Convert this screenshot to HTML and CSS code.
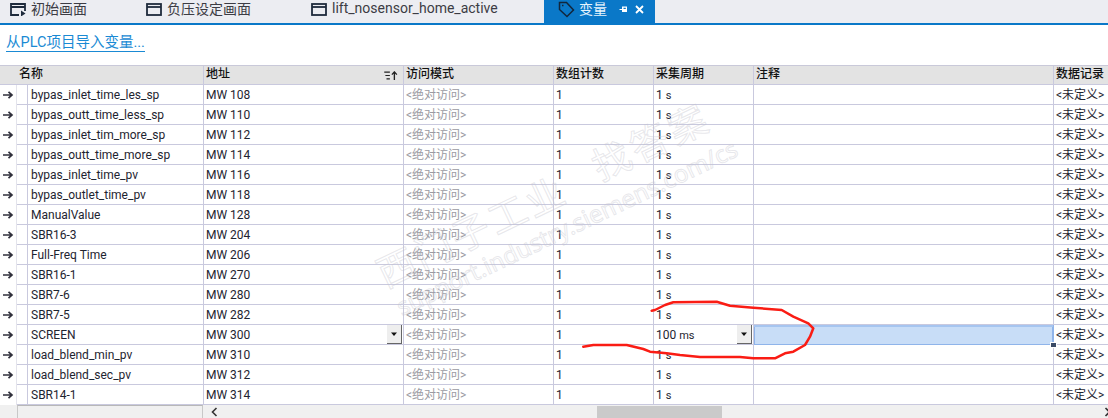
FILE: index.html
```html
<!DOCTYPE html>
<html lang="zh">
<head>
<meta charset="utf-8">
<title>变量</title>
<link rel="stylesheet" href="styles.css">
</head>
<body>
<svg width="0" height="0" class="defs"><defs>
<symbol id="arrow" viewBox="0 0 12 10"><path d="M1 5H9.5M6.5 1.8 10 5 6.500 8.200" fill="none" stroke="#30303c" stroke-width="1.700"/></symbol>
<symbol id="drop" viewBox="0 0 8 5"><path d="M1 .5H7L4 4Z" fill="#111"/></symbol>
<symbol id="screen" viewBox="0 0 16 13"><rect x="1" y="1" width="14" height="11" fill="none" stroke="#1e2a3c" stroke-width="1.800"/><path d="M1 4H15" stroke="#1e2a3c" stroke-width="1.800"/></symbol>
</defs></svg>
<nav class="tabs">
  <div class="tab tab-a"><svg class="ico" viewBox="0 0 16 13"><path d="M9 12H1V1H15V8M1 4H15" fill="none" stroke="#1e2a3c" stroke-width="1.800"/><path d="M11 7.500 15.500 10.500 11 13.500Z" fill="#1e2a3c"/></svg>初始画面</div>
  <div class="tab tab-b"><svg class="ico"><use href="#screen"/></svg>负压设定画面</div>
  <div class="tab tab-c"><svg class="ico"><use href="#screen"/></svg>lift_nosensor_home_active</div>
  <div class="tab tab-on">
    <svg class="tag" viewBox="0 0 17 17"><path d="M1.500 1.500H8.500L15.500 9 9 15.500 1.500 8.500ZM4 4.500H5.500" fill="none" stroke="#12263c" stroke-width="1.500"/></svg>
    <span class="tab-title">变量</span>
    <svg class="pin" viewBox="0 0 9 9"><path d="M.5 4H3V1.500H8V7H3V5H.5ZM4.500 2.800V4H6.800V2.800Z" fill="#fff" fill-rule="evenodd"/></svg>
    <svg class="close" viewBox="0 0 9 9"><path d="M1 1 8 8M8 1 1 8" stroke="#fff" stroke-width="1.800"/></svg>
  </div>
</nav>
<div class="link-bar"><a class="link">从PLC项目导入变量...</a></div>
<main class="sheet">
  <div class="row head">
    <div class="c c-arrow"></div><div class="c c-mark"></div>
    <div class="c c-name">名称</div>
    <div class="c c-addr">地址<span class="sort"><svg viewBox="0 0 12 8"><path d="M0 1H5M1 4H5M2 7H5" stroke="#222" stroke-width="1"/><path d="M9 8V1M6.800 3.200 9 .8 11.200 3.200" fill="none" stroke="#222" stroke-width="1.200"/></svg></span></div>
    <div class="c c-mode">访问模式</div><div class="c c-count">数组计数</div><div class="c c-cycle">采集周期</div><div class="c c-note">注释</div><div class="c c-log">数据记录</div>
  </div>
  <div class="row"><div class="c c-arrow"><svg class="arr"><use href="#arrow"/></svg></div><div class="c c-mark"></div><div class="c c-name">bypas_inlet_time_les_sp</div><div class="c c-addr">MW 108</div><div class="c c-mode">&lt;绝对访问&gt;</div><div class="c c-count">1</div><div class="c c-cycle">1 <small>s</small></div><div class="c c-note"></div><div class="c c-log">&lt;未定义&gt;</div></div>
  <div class="row"><div class="c c-arrow"><svg class="arr"><use href="#arrow"/></svg></div><div class="c c-mark"></div><div class="c c-name">bypas_outt_time_less_sp</div><div class="c c-addr">MW 110</div><div class="c c-mode">&lt;绝对访问&gt;</div><div class="c c-count">1</div><div class="c c-cycle">1 <small>s</small></div><div class="c c-note"></div><div class="c c-log">&lt;未定义&gt;</div></div>
  <div class="row"><div class="c c-arrow"><svg class="arr"><use href="#arrow"/></svg></div><div class="c c-mark"></div><div class="c c-name">bypas_inlet_tim_more_sp</div><div class="c c-addr">MW 112</div><div class="c c-mode">&lt;绝对访问&gt;</div><div class="c c-count">1</div><div class="c c-cycle">1 <small>s</small></div><div class="c c-note"></div><div class="c c-log">&lt;未定义&gt;</div></div>
  <div class="row"><div class="c c-arrow"><svg class="arr"><use href="#arrow"/></svg></div><div class="c c-mark"></div><div class="c c-name">bypas_outt_time_more_sp</div><div class="c c-addr">MW 114</div><div class="c c-mode">&lt;绝对访问&gt;</div><div class="c c-count">1</div><div class="c c-cycle">1 <small>s</small></div><div class="c c-note"></div><div class="c c-log">&lt;未定义&gt;</div></div>
  <div class="row"><div class="c c-arrow"><svg class="arr"><use href="#arrow"/></svg></div><div class="c c-mark"></div><div class="c c-name">bypas_inlet_time_pv</div><div class="c c-addr">MW 116</div><div class="c c-mode">&lt;绝对访问&gt;</div><div class="c c-count">1</div><div class="c c-cycle">1 <small>s</small></div><div class="c c-note"></div><div class="c c-log">&lt;未定义&gt;</div></div>
  <div class="row"><div class="c c-arrow"><svg class="arr"><use href="#arrow"/></svg></div><div class="c c-mark"></div><div class="c c-name">bypas_outlet_time_pv</div><div class="c c-addr">MW 118</div><div class="c c-mode">&lt;绝对访问&gt;</div><div class="c c-count">1</div><div class="c c-cycle">1 <small>s</small></div><div class="c c-note"></div><div class="c c-log">&lt;未定义&gt;</div></div>
  <div class="row"><div class="c c-arrow"><svg class="arr"><use href="#arrow"/></svg></div><div class="c c-mark"></div><div class="c c-name">ManualValue</div><div class="c c-addr">MW 128</div><div class="c c-mode">&lt;绝对访问&gt;</div><div class="c c-count">1</div><div class="c c-cycle">1 <small>s</small></div><div class="c c-note"></div><div class="c c-log">&lt;未定义&gt;</div></div>
  <div class="row"><div class="c c-arrow"><svg class="arr"><use href="#arrow"/></svg></div><div class="c c-mark"></div><div class="c c-name">SBR16-3</div><div class="c c-addr">MW 204</div><div class="c c-mode">&lt;绝对访问&gt;</div><div class="c c-count">1</div><div class="c c-cycle">1 <small>s</small></div><div class="c c-note"></div><div class="c c-log">&lt;未定义&gt;</div></div>
  <div class="row"><div class="c c-arrow"><svg class="arr"><use href="#arrow"/></svg></div><div class="c c-mark"></div><div class="c c-name">Full-Freq Time</div><div class="c c-addr">MW 206</div><div class="c c-mode">&lt;绝对访问&gt;</div><div class="c c-count">1</div><div class="c c-cycle">1 <small>s</small></div><div class="c c-note"></div><div class="c c-log">&lt;未定义&gt;</div></div>
  <div class="row"><div class="c c-arrow"><svg class="arr"><use href="#arrow"/></svg></div><div class="c c-mark"></div><div class="c c-name">SBR16-1</div><div class="c c-addr">MW 270</div><div class="c c-mode">&lt;绝对访问&gt;</div><div class="c c-count">1</div><div class="c c-cycle">1 <small>s</small></div><div class="c c-note"></div><div class="c c-log">&lt;未定义&gt;</div></div>
  <div class="row"><div class="c c-arrow"><svg class="arr"><use href="#arrow"/></svg></div><div class="c c-mark"></div><div class="c c-name">SBR7-6</div><div class="c c-addr">MW 280</div><div class="c c-mode">&lt;绝对访问&gt;</div><div class="c c-count">1</div><div class="c c-cycle">1 <small>s</small></div><div class="c c-note"></div><div class="c c-log">&lt;未定义&gt;</div></div>
  <div class="row"><div class="c c-arrow"><svg class="arr"><use href="#arrow"/></svg></div><div class="c c-mark"></div><div class="c c-name">SBR7-5</div><div class="c c-addr">MW 282</div><div class="c c-mode">&lt;绝对访问&gt;</div><div class="c c-count">1</div><div class="c c-cycle">1 <small>s</small></div><div class="c c-note"></div><div class="c c-log">&lt;未定义&gt;</div></div>
  <div class="row"><div class="c c-arrow"><svg class="arr"><use href="#arrow"/></svg></div><div class="c c-mark"></div><div class="c c-name">SCREEN</div><div class="c c-addr has-drop">MW 300<span class="drop"><svg><use href="#drop"/></svg></span></div><div class="c c-mode">&lt;绝对访问&gt;</div><div class="c c-count">1</div><div class="c c-cycle has-drop">100 <small>ms</small><span class="drop"><svg><use href="#drop"/></svg></span></div><div class="c c-note selected"><span class="handle"></span></div><div class="c c-log">&lt;未定义&gt;</div></div>
  <div class="row"><div class="c c-arrow"><svg class="arr"><use href="#arrow"/></svg></div><div class="c c-mark"></div><div class="c c-name">load_blend_min_pv</div><div class="c c-addr">MW 310</div><div class="c c-mode">&lt;绝对访问&gt;</div><div class="c c-count">1</div><div class="c c-cycle">1 <small>s</small></div><div class="c c-note"></div><div class="c c-log">&lt;未定义&gt;</div></div>
  <div class="row"><div class="c c-arrow"><svg class="arr"><use href="#arrow"/></svg></div><div class="c c-mark"></div><div class="c c-name">load_blend_sec_pv</div><div class="c c-addr">MW 312</div><div class="c c-mode">&lt;绝对访问&gt;</div><div class="c c-count">1</div><div class="c c-cycle">1 <small>s</small></div><div class="c c-note"></div><div class="c c-log">&lt;未定义&gt;</div></div>
  <div class="row"><div class="c c-arrow"><svg class="arr"><use href="#arrow"/></svg></div><div class="c c-mark"></div><div class="c c-name">SBR14-1</div><div class="c c-addr">MW 314</div><div class="c c-mode">&lt;绝对访问&gt;</div><div class="c c-count">1</div><div class="c c-cycle">1 <small>s</small></div><div class="c c-note"></div><div class="c c-log">&lt;未定义&gt;</div></div>
  <div class="scroll-row">
    <div class="sb-gap"></div>
    <div class="sb-frozen"></div>
    <div class="sb-track">
      <svg class="sb-left" viewBox="0 0 7 10"><path d="M5.500 1 1.500 5 5.500 9" fill="none" stroke="#333" stroke-width="1.600"/></svg>
      <div class="sb-thumb"></div>
      <svg class="sb-right" viewBox="0 0 7 10"><path d="M1.500 1 5.500 5 1.500 9" fill="none" stroke="#333" stroke-width="1.600"/></svg>
    </div>
  </div>
</main>
<div class="wm wm-cn">西门子工业</div>
<div class="wm wm-cn2">找答案</div>
<div class="wm wm-url">support.industry.siemens.com/cs</div>
<svg class="scribble" viewBox="0 0 1108 418"><path d="M651.700 310.700 655 310 665 305 673.300 302.300 716.700 301.700 730 305.700 753.300 307.700 781.700 310 793.300 316.700 808.300 323.300 813.300 328.300 810 336.700 805 345 793.300 351.700 785 353.300 775 358.300 753.300 358.300 740 357 700 357 680 355 666.700 353.300 650 351.700 643.300 349 626.700 345 593.300 345 583.300 346.700" fill="none" stroke="#fa1c14" stroke-width="2.500" stroke-linecap="round" stroke-linejoin="round"/></svg>
</body>
</html>
```
FILE: styles.css
```css
* { box-sizing: border-box; }
html, body { margin: 0; height: 418px; overflow: hidden; }
body {
  position: relative;
  width: 1108px;
  background: #fff;
  color: #1e2430;
  font: 12px Roboto, "Noto Sans CJK SC", sans-serif;
}
.defs { position: absolute; }
.tabs {
  display: flex;
  height: 25px;
  background: #ecedf2;
  border-bottom: 2px solid #0a78c8;
}
.tab {
  display: flex;
  align-items: center;
  padding: 0 0 8px 10px;
  height: 23px;
  font-size: 14px;
  color: #3c3c44;
  white-space: nowrap;
}
.ico { width: 16px; height: 13px; margin: 3px 5px 0 0; flex: none; }
.tab-a { width: 136px; }
.tab-b { width: 165px; }
.tab-c { width: 243px; }
.tab-on {
  width: 111px;
  padding-left: 14px;
  padding-bottom: 5px;
  background: #0a78c8;
  color: #e6f3fc;
}
.tag { width: 17px; height: 17px; margin-right: 4px; flex: none; }
.tab-title { width: 40px; margin-bottom: 2px; }
.pin { width: 9px; height: 9px; margin-right: 7px; flex: none; }
.close { width: 9px; height: 9px; flex: none; }
.link-bar { height: 40px; padding: 10px 0 0 6px; }
.link {
  display: inline-block;
  font-size: 14.500px;
  line-height: 16px;
  color: #1a8ad4;
  border-bottom: 1px solid #1a8ad4;
}
.sheet { border-top: 1px solid #c9c9d9; }
.row {
  display: grid;
  grid-template-columns: 17px 11px 176px 200px 150px 100px 100px 300px 54px;
  height: 20px;
  border-bottom: 1px solid #c9c9de;
}
.row.head {
  height: 19px;
  background: #e3e3e3;
  font-weight: 500;
  color: #111;
  border-bottom: 1px solid #c9c9de;
}
.row.head .c { border-right-color: #c9c9de; line-height: 16px; color: #111; }
.row.head .c-arrow, .row.head .c-mark { border-right: 0; }
.row.head .c-name { margin-left: -9px; padding-left: 0; }
.c {
  position: relative;
  min-width: 0;
  padding-left: 2px;
  border-right: 1px solid #c9c9de;
  line-height: 20px;
  white-space: nowrap;
  overflow: hidden;
}
.c-arrow { padding: 5px 0 0 2px; border-right: 1px solid #e4e4ec; background: #fff; }
.head .c-arrow { background: #e3e3e3; }
.arr { display: block; width: 12px; height: 10px; }
.c-name { padding-left: 3px; }
.c-mode { color: #9a9aa2; }
.c-log { border-right: 0; overflow: visible; padding-left: 2px; }
.c-cycle small { font-size: 11px; }
.sort { position: absolute; right: 5px; top: 5px; }
.sort svg { display: block; width: 14px; height: 9px; }
.has-drop .drop {
  position: absolute;
  right: 1px;
  top: 0;
  width: 15px;
  height: 19px;
  background: #eeeeee;
  border-right: 1px solid #666;
  border-bottom: 1px solid #666;
  display: flex;
  align-items: center;
  justify-content: center;
}
.drop svg { width: 8px; height: 5px; }
.selected {
  overflow: visible;
  background: #c8ddf7;
  box-shadow: inset 0 2px 0 #a6c5f0, inset 1px 0 0 #8fb4ea, inset 0 -1px 0 #8fb4ea, inset -1px 0 0 #8fb4ea;
  border-right-color: #8fb4ea;
}
.handle {
  position: absolute;
  right: -3px;
  bottom: -2px;
  width: 5px;
  height: 4px;
  background: #3a4a66;
  outline: 1px solid #fff;
  z-index: 1;
}
.scroll-row { display: flex; height: 13px; background: #f0f0f0; }
.sb-gap { width: 17px; }
.sb-frozen { width: 186px; background: #f0f0f0; border: 1px solid #c8c8c8; border-bottom: 0; border-top-color: #b8b8b8; }
.sb-track { position: relative; flex: 1; display: flex; align-items: center; padding-left: 5px; }
.sb-left { width: 7px; height: 10px; margin-left: 3px; }
.sb-thumb { position: absolute; left: 394px; top: 1px; width: 125px; height: 12px; background: #cacaca; }
.sb-right { position: absolute; right: -3px; top: 2px; width: 7px; height: 10px; }
.wm {
  position: absolute;
  color: transparent;
  -webkit-text-stroke: 1px rgba(195, 195, 205, .4);
  pointer-events: none;
  white-space: nowrap;
  transform: rotate(-25.500deg);
  transform-origin: left center;
  font-family: "Noto Sans", "Noto Sans CJK SC", sans-serif;
}
.wm-cn { left: 379px; top: 253px; font-size: 38px; letter-spacing: 3px; line-height: 44px; }
.wm-cn2 { left: 594px; top: 146px; font-size: 38px; letter-spacing: 4px; line-height: 44px; }
.wm-url { left: 398px; top: 294px; font-size: 24px; line-height: 28px; }
.scribble { position: absolute; inset: 0; width: 1108px; height: 418px; pointer-events: none; }
```
